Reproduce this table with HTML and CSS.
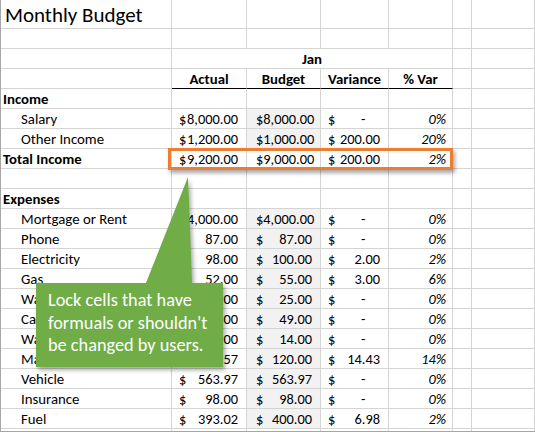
FILE: index.html
```html
<!DOCTYPE html>
<html>
<head>
<meta charset="utf-8">
<link rel="stylesheet" href="styles.css">
</head>
<body>
<div class="sheet">
  <div class="row tall"><div class="c ttl">Monthly Budget</div><div class="c"></div><div class="c"></div><div class="c"></div><div class="c"></div><div class="c"></div><div class="c"></div></div>
  <div class="row"><div class="c"></div><div class="c"></div><div class="c"></div><div class="c"></div><div class="c"></div><div class="c"></div><div class="c"></div></div>
  <div class="row"><div class="c"></div><div class="c jan">Jan</div><div class="c"></div><div class="c"></div></div>
  <div class="row"><div class="c"></div><div class="c hd">Actual</div><div class="c hd">Budget</div><div class="c hd">Variance</div><div class="c hd">% Var</div><div class="c"></div><div class="c"></div></div>
  <div class="row"><div class="c b">Income</div><div class="c"></div><div class="c"></div><div class="c"></div><div class="c"></div><div class="c"></div><div class="c"></div></div>
  <div class="row"><div class="c lbl">Salary</div><div class="c acct"><span>$</span><span>8,000.00</span></div><div class="c acct bud fill"><span>$</span><span>8,000.00</span></div><div class="c acct"><span>$</span><span class="dash">-</span></div><div class="c pct">0%</div><div class="c"></div><div class="c"></div></div>
  <div class="row"><div class="c lbl">Other Income</div><div class="c acct ul"><span>$</span><span>1,200.00</span></div><div class="c acct bud fill ul"><span>$</span><span>1,000.00</span></div><div class="c acct ul"><span>$</span><span>200.00</span></div><div class="c pct ul">20%</div><div class="c"></div><div class="c"></div></div>
  <div class="row"><div class="c b">Total Income</div><div class="c acct"><span>$</span><span>9,200.00</span></div><div class="c acct bud"><span>$</span><span>9,000.00</span></div><div class="c acct"><span>$</span><span>200.00</span></div><div class="c pct">2%</div><div class="c"></div><div class="c"></div></div>
  <div class="row"><div class="c"></div><div class="c"></div><div class="c"></div><div class="c"></div><div class="c"></div><div class="c"></div><div class="c"></div></div>
  <div class="row"><div class="c b">Expenses</div><div class="c"></div><div class="c"></div><div class="c"></div><div class="c"></div><div class="c"></div><div class="c"></div></div>
  <div class="row"><div class="c lbl">Mortgage or Rent</div><div class="c acct"><span>$</span><span>4,000.00</span></div><div class="c acct bud fill"><span>$</span><span>4,000.00</span></div><div class="c acct"><span>$</span><span class="dash">-</span></div><div class="c pct">0%</div><div class="c"></div><div class="c"></div></div>
  <div class="row"><div class="c lbl">Phone</div><div class="c acct"><span>$</span><span>87.00</span></div><div class="c acct bud fill"><span>$</span><span>87.00</span></div><div class="c acct"><span>$</span><span class="dash">-</span></div><div class="c pct">0%</div><div class="c"></div><div class="c"></div></div>
  <div class="row"><div class="c lbl">Electricity</div><div class="c acct"><span>$</span><span>98.00</span></div><div class="c acct bud fill"><span>$</span><span>100.00</span></div><div class="c acct"><span>$</span><span>2.00</span></div><div class="c pct">2%</div><div class="c"></div><div class="c"></div></div>
  <div class="row"><div class="c lbl">Gas</div><div class="c acct"><span>$</span><span>52.00</span></div><div class="c acct bud fill"><span>$</span><span>55.00</span></div><div class="c acct"><span>$</span><span>3.00</span></div><div class="c pct">6%</div><div class="c"></div><div class="c"></div></div>
  <div class="row"><div class="c lbl">Water</div><div class="c acct"><span>$</span><span>25.00</span></div><div class="c acct bud fill"><span>$</span><span>25.00</span></div><div class="c acct"><span>$</span><span class="dash">-</span></div><div class="c pct">0%</div><div class="c"></div><div class="c"></div></div>
  <div class="row"><div class="c lbl">Cable</div><div class="c acct"><span>$</span><span>49.00</span></div><div class="c acct bud fill"><span>$</span><span>49.00</span></div><div class="c acct"><span>$</span><span class="dash">-</span></div><div class="c pct">0%</div><div class="c"></div><div class="c"></div></div>
  <div class="row"><div class="c lbl">Waste</div><div class="c acct"><span>$</span><span>14.00</span></div><div class="c acct bud fill"><span>$</span><span>14.00</span></div><div class="c acct"><span>$</span><span class="dash">-</span></div><div class="c pct">0%</div><div class="c"></div><div class="c"></div></div>
  <div class="row"><div class="c lbl">Maintenance</div><div class="c acct"><span>$</span><span>105.57</span></div><div class="c acct bud fill"><span>$</span><span>120.00</span></div><div class="c acct"><span>$</span><span>14.43</span></div><div class="c pct">14%</div><div class="c"></div><div class="c"></div></div>
  <div class="row"><div class="c lbl">Vehicle</div><div class="c acct"><span>$</span><span>563.97</span></div><div class="c acct bud fill"><span>$</span><span>563.97</span></div><div class="c acct"><span>$</span><span class="dash">-</span></div><div class="c pct">0%</div><div class="c"></div><div class="c"></div></div>
  <div class="row"><div class="c lbl">Insurance</div><div class="c acct"><span>$</span><span>98.00</span></div><div class="c acct bud fill"><span>$</span><span>98.00</span></div><div class="c acct"><span>$</span><span class="dash">-</span></div><div class="c pct">0%</div><div class="c"></div><div class="c"></div></div>
  <div class="row"><div class="c lbl">Fuel</div><div class="c acct"><span>$</span><span>393.02</span></div><div class="c acct bud fill"><span>$</span><span>400.00</span></div><div class="c acct"><span>$</span><span>6.98</span></div><div class="c pct">2%</div><div class="c"></div><div class="c"></div></div>
  <div class="row"><div class="c"></div><div class="c"></div><div class="c"></div><div class="c"></div><div class="c"></div><div class="c"></div><div class="c"></div></div>

  <div class="hilite"></div>

  <div class="callout">
    <svg class="callout-shape" width="190" height="193" viewBox="0 0 190 193">
      <path d="M152 0 L156 106 L187 106 L187 190 L0 190 L0 106 L110 106 Z" fill="#70ad47"/>
    </svg>
    <p class="callout-text">Lock cells that have formuals or shouldn't be changed by users.</p>
  </div>
</div>
</body>
</html>
```
FILE: styles.css
```css
html, body {
  margin: 0;
  background: #fff;
}

.sheet {
  position: relative;
  width: 535px;
  height: 432px;
  box-sizing: border-box;
  border-left: 1px solid #a6a6a6;
  border-bottom: 1px solid #a6a6a6;
  overflow: hidden;
  font-family: Carlito, Calibri, Lato, sans-serif;
  font-size: 14.8px;
  color: #000;
}

.row {
  display: grid;
  grid-template-columns: 171px 75px 74px 68px 64px 19px 1fr;
  height: 20px;
}

.row.tall {
  height: 29px;
}

.c {
  box-sizing: border-box;
  border-right: 1px solid #d4d4d4;
  border-bottom: 1px solid #d4d4d4;
  display: flex;
  align-items: flex-end;
  line-height: 18px;
  white-space: nowrap;
  min-width: 0;
}

.ttl {
  font-size: 21px;
  line-height: 26px;
  padding-left: 4px;
}

.jan {
  grid-column: span 4;
  justify-content: center;
  font-weight: bold;
}

.hd {
  justify-content: center;
  font-weight: bold;
  border-bottom-color: #000;
}

.b {
  font-weight: bold;
  padding-left: 2px;
}

.lbl {
  padding-left: 20px;
}

.acct {
  justify-content: space-between;
  padding: 0 8px 0 7px;
  font-size: 14.4px;
}

.bud {
  padding-left: 9px;
}

.fill {
  background: #f2f2f2;
}

.ul {
  border-bottom-color: #000;
}

.dash {
  padding-right: 2ch;
}

.pct {
  justify-content: flex-end;
  font-style: italic;
  font-size: 14.4px;
  padding-right: 6px;
}

.hilite {
  position: absolute;
  left: 167px;
  top: 148px;
  width: 285px;
  height: 22px;
  box-sizing: border-box;
  border: 3px solid #ed7d31;
  box-shadow: 2px 3px 4px rgba(0, 0, 0, 0.35);
}

.callout {
  position: absolute;
  left: 35px;
  top: 177px;
  width: 190px;
  height: 193px;
}

.callout-shape {
  position: absolute;
  left: 0;
  top: 0;
  filter: drop-shadow(2px 3px 2px rgba(0, 0, 0, 0.35));
}

.callout-text {
  position: relative;
  margin: 0;
  padding: 112px 6px 0 12px;
  color: #fff;
  font-size: 18.3px;
  line-height: 22.5px;
}
```
